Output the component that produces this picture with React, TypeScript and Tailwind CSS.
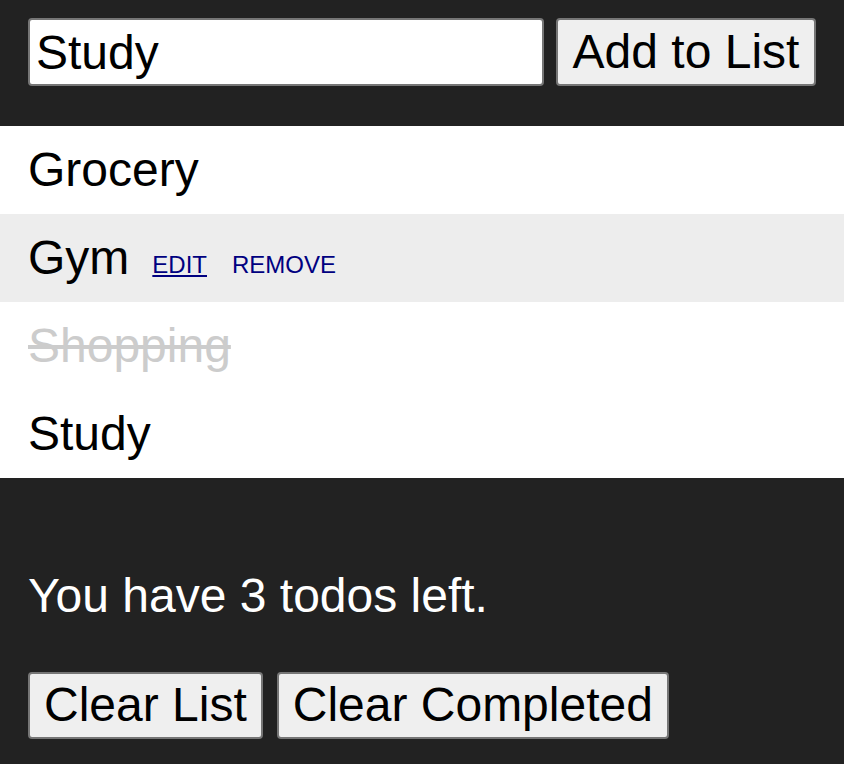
import React, { useState } from "react";

type Todo = { id: number; text: string; done: boolean };

const font = { fontFamily: '"Liberation Sans", Arial, sans-serif' };

const App: React.FC = () => {
  const [value, setValue] = useState("Study");
  const [hovered] = useState(2);
  const todos: Todo[] = [
    { id: 1, text: "Grocery", done: false },
    { id: 2, text: "Gym", done: false },
    { id: 3, text: "Shopping", done: true },
    { id: 4, text: "Study", done: false },
  ];
  const left = todos.filter((t) => !t.done).length;

  return (
    <div
      className="min-h-[764px] bg-[#222222] text-[48px] leading-[56px]"
      style={font}
    >
      <div className="flex gap-3 px-7 pt-[18px] pb-10">
        <input
          className="h-[68px] w-[516px] rounded-[4px] border-2 border-[#767676] bg-white px-[6px] text-[48px] text-black outline-none"
          value={value}
          onChange={(e) => setValue(e.target.value)}
        />
        <button className="h-[68px] w-[260px] shrink-0 whitespace-nowrap rounded-[4px] border-2 border-[#767676] bg-[#efefef] text-[48px] text-black">
          Add to List
        </button>
      </div>

      <ul className="bg-white">
        {todos.map((t) => (
          <li
            key={t.id}
            className={
              "flex h-[88px] items-center px-7 " +
              (t.id === hovered ? "bg-[#ededed]" : "bg-white")
            }
          >
            <span
              className={
                t.done ? "text-[#cccccc] line-through" : "text-black"
              }
            >
              {t.text}
            </span>
            {t.id === hovered && (
              <span className="ml-[23px] flex gap-[25px] pt-[14px] text-[24px] leading-[28px] text-[#000080]">
                <a className="underline">EDIT</a>
                <a>REMOVE</a>
              </span>
            )}
          </li>
        ))}
      </ul>

      <p className="px-7 pt-[90px] pb-12 text-white">
        You have {left} todos left.
      </p>

      <div className="flex gap-[14px] px-7 pb-[26px]">
        <button className="h-[67px] whitespace-nowrap rounded-[4px] border-2 border-[#767676] bg-[#efefef] px-[14px] pb-[2px] text-[48px] text-black">
          Clear List
        </button>
        <button className="h-[67px] whitespace-nowrap rounded-[4px] border-2 border-[#767676] bg-[#efefef] px-[14px] pb-[2px] text-[48px] text-black">
          Clear Completed
        </button>
      </div>
    </div>
  );
};

export default App;
